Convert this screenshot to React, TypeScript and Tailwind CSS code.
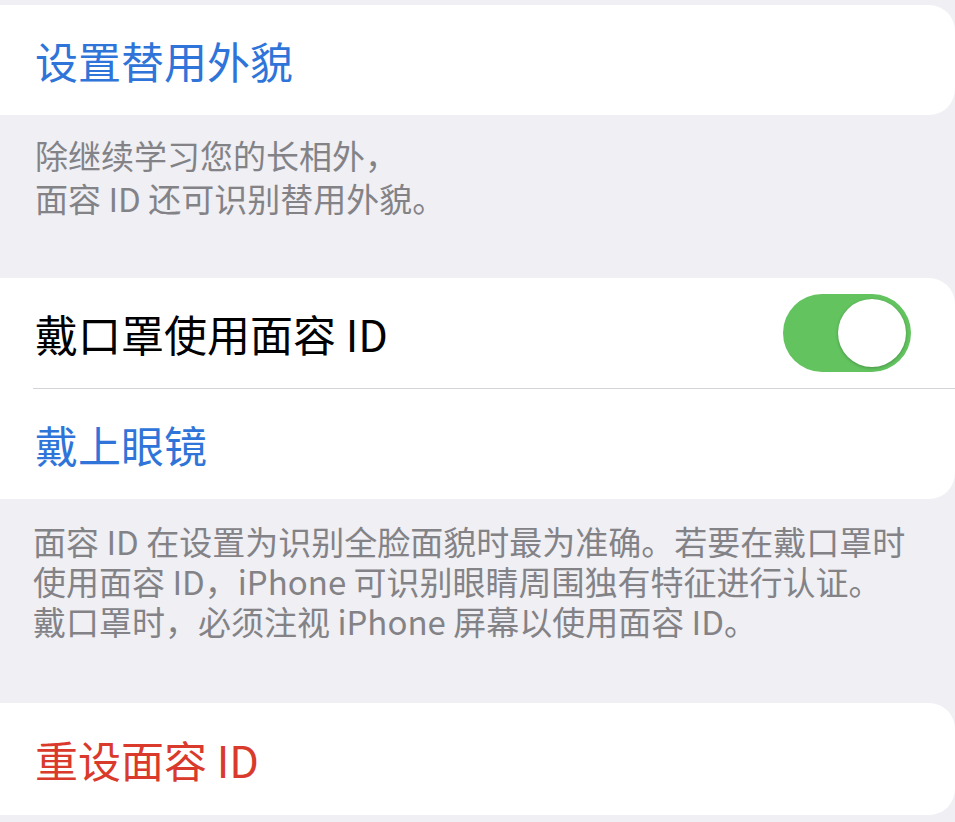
export default function App() {
  const font = { fontFamily: '"Noto Sans CJK SC", "Noto Sans", sans-serif' };
  return (
    <div
      className="w-[955px] h-[822px] overflow-hidden bg-[#efeff4] flex flex-col pt-[5px]"
      style={font}
    >
      {/* alternate appearance */}
      <div className="h-[110px] bg-white rounded-r-[26px] flex items-center pl-[35px]">
        <span className="text-[43px] text-[#2f74d9] leading-none">设置替用外貌</span>
      </div>
      <p className="pt-[19px] pl-[35px] text-[33px] leading-[43px] text-[#838387] whitespace-nowrap">
        除继续学习您的长相外，
        <br />
        面容 ID 还可识别替用外貌。
      </p>

      {/* mask section */}
      <div className="mt-[58px] bg-white rounded-r-[26px] flex flex-col">
        <div className="h-[110px] flex items-center justify-between pl-[35px] pr-[44px]">
          <span className="text-[43px] text-black leading-none">戴口罩使用面容 ID</span>
          <div className="w-[128px] h-[78px] rounded-full bg-[#62c35f] flex items-center justify-end pr-[5px]">
            <div className="w-[68px] h-[68px] rounded-full bg-white shadow-[0_1px_3px_rgba(0,0,0,0.25)]" />
          </div>
        </div>
        <div className="ml-[33px] h-px bg-[#d4d4d8]" />
        <div className="h-[110px] flex items-center pl-[35px]">
          <span className="text-[43px] text-[#2f74d9] leading-none">戴上眼镜</span>
        </div>
      </div>
      <div className="pt-[22px] pl-[33px] text-[33px] leading-[40px] text-[#838387] whitespace-nowrap flex flex-col">
        <span className="h-[40px]">面容 ID 在设置为识别全脸面貌时最为准确。若要在戴口罩时</span>
        <span className="h-[40px]">使用面容 ID，iPhone 可识别眼睛周围独有特征进行认证。</span>
        <span className="h-[40px]">戴口罩时，必须注视 iPhone 屏幕以使用面容 ID。</span>
      </div>

      {/* reset */}
      <div className="mt-[62px] h-[112px] bg-white rounded-r-[26px] flex items-center pl-[35px]">
        <span className="text-[43px] text-[#d93a2b] leading-none">重设面容 ID</span>
      </div>
    </div>
  );
}
